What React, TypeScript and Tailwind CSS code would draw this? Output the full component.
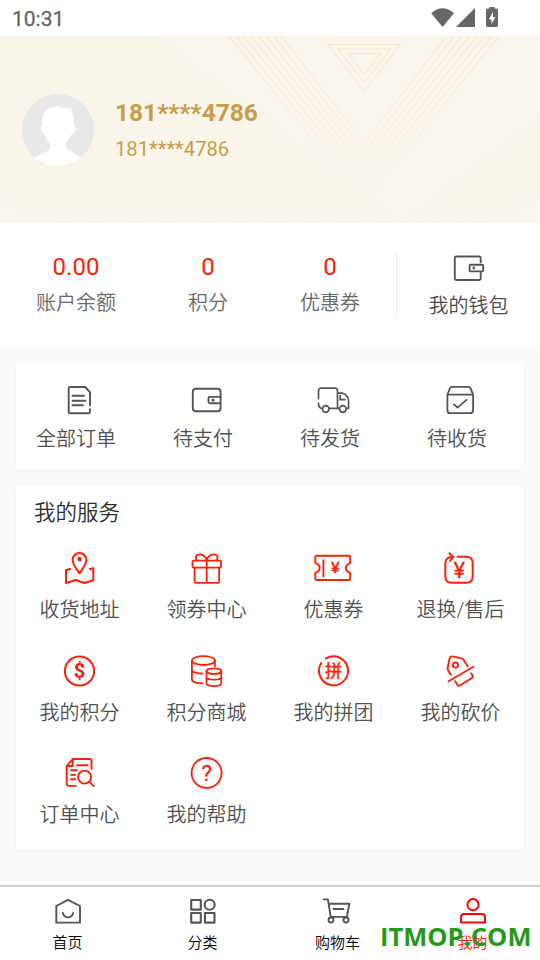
import type { ReactNode } from 'react';

type Item = { label: string; icon: ReactNode };

const GRAY = '#555';
const RED = '#fb2108';

function Icon({ w = 41, h = 40, color = RED, sw = 2, children }: {
  w?: number;
  h?: number;
  color?: string;
  sw?: number;
  children: ReactNode;
}) {
  return (
    <svg
      width={w}
      height={h}
      viewBox={`0 0 ${w} ${h}`}
      fill="none"
      stroke={color}
      strokeWidth={sw}
      strokeLinecap="round"
      strokeLinejoin="round"
      className="block shrink-0"
    >
      {children}
    </svg>
  );
}

const orders: Item[] = [
  {
    label: '全部订单',
    icon: (
      <Icon color={GRAY} sw={1.9}>
        <path d="M31 29.3v2.5q0 1.4-1.4 1.4H11q-1.3 0-1.3-1.3V8.2Q9.7 7 11 7h15.3l4.7 5.3v13.2M13.5 15.7H25M13.5 20.7h13M13.5 25.3H24" />
      </Icon>
    ),
  },
  {
    label: '待支付',
    icon: (
      <Icon color={GRAY} sw={1.9}>
        <rect x="6.8" y="8.7" width="27.8" height="22.6" rx="3" />
        <path d="M34.6 16.9H24q-1.5 0-1.5 1.5v3.4q0 1.5 1.5 1.5h10.6" />
        <circle cx="27" cy="20.1" r="0.7" fill={GRAY} />
      </Icon>
    ),
  },
  {
    label: '待发货',
    icon: (
      <Icon color={GRAY} sw={1.7}>
        <path d="M5.5 18.7V11q0-2.8 2.8-2.8h13.4q2.8 0 2.8 2.8v17.2M5.5 23.3q0 4.8 3.6 5.2M16.2 28.3h10M24.5 13.2h5.3c3.4.9 5.8 4.4 5.8 7.8v7.3h-2.2M27.2 15.5v4.2h4.6" />
        <circle cx="12.7" cy="29" r="3.3" />
        <circle cx="29.8" cy="29" r="3.3" />
      </Icon>
    ),
  },
  {
    label: '待收货',
    icon: (
      <Icon color={GRAY} sw={1.8}>
        <path d="M7.4 14.7 9.9 8.2q.6-1.4 2-1.4h16.6q1.4 0 2 1.4l2.6 6.5v15.5q0 3-3 3H10.4q-3 0-3-3zH33M13.9 24.3l3.6 3.3 9-7.7" />
      </Icon>
    ),
  },
];

const services: Item[] = [
  {
    label: '收货地址',
    icon: (
      <Icon>
        <path d="M20.4 25.3C17 20.5 13.6 16.2 13.6 12a6.9 7.1 0 0 1 13.8 0c0 4.2-3.4 8.5-7 13.3zM11 21l-4 1.3V35l9.7-3 8.6 3 9-2.8V20.1l-3.5.9" />
        <circle cx="20.5" cy="11" r="1.2" fill={RED} />
      </Icon>
    ),
  },
  {
    label: '领券中心',
    icon: (
      <Icon sw={1.8}>
        <rect x="6.5" y="12.6" width="28.6" height="7" rx="1.2" />
        <path d="M8.6 19.6v13.3q0 1.9 1.9 1.9h20.7q1.9 0 1.9-1.9V19.6M20.7 12.6v22M20.7 12.4C19.5 7.5 14.5 5 10.8 7.3c-1.6 1.7-1 3.6.3 5.1M20.7 12.4c1.2-4.9 6.2-7.4 9.9-5.1 1.6 1.7 1 3.6-.3 5.1" />
      </Icon>
    ),
  },
  {
    label: '优惠券',
    icon: (
      <Icon sw={1.9}>
        <path d="M4 7.8h31.5q1.7 0 1.7 1.7v5.7c-5.8 2-5.8 7.6 0 9.6v5.5q0 1.7-1.7 1.7H4q-1.7 0-1.7-1.7v-5.5c5.8-2 5.8-7.6 0-9.6V9.5Q2.3 7.8 4 7.8zM10.4 12.3v15.9" />
        <text x="22.4" y="25.2" textAnchor="middle" fill={RED} strokeWidth="0.6" className="text-[15.5px] font-normal font-[Roboto]">¥</text>
      </Icon>
    ),
  },
  {
    label: '退换/售后',
    icon: (
      <Icon>
        <path d="M17.6 8.8h8.6q6.5 0 6.5 6.5v13q0 6.5-6.5 6.5H11.8q-6.5 0-6.5-6.5V15.5q0-6.5 7.7-6.8M9.3 5.3l4 3.5-3.3 4" />
        <text x="19.4" y="29.8" textAnchor="middle" fill={RED} strokeWidth="0.3" className="text-[22px] font-normal font-[Roboto]">¥</text>
      </Icon>
    ),
  },
  {
    label: '我的积分',
    icon: (
      <Icon>
        <circle cx="20.5" cy="20" r="14.6" />
        <text x="20.4" y="26.9" textAnchor="middle" fill={RED} stroke="none" className="text-[20px] font-bold font-[Roboto]">$</text>
      </Icon>
    ),
  },
  {
    label: '积分商城',
    icon: (
      <Icon sw={1.8}>
        <ellipse cx="17.4" cy="9.6" rx="11.5" ry="4.4" />
        <path d="M5.9 9.6v19.2c0 2 4.5 3.5 10.6 3.5M5.9 18.4c0 2.5 4.5 4.3 10.6 4.3M28.9 9.6V15" />
        <ellipse cx="27.9" cy="20.2" rx="7.4" ry="2.8" />
        <path d="M20.5 20.2v12c0 3.8 14.8 3.8 14.8 0v-12M20.5 26c0 3.6 14.8 3.6 14.8 0" />
      </Icon>
    ),
  },
  {
    label: '我的拼团',
    icon: (
      <Icon>
        <path d="M13 7.4A14.5 14.5 0 1 1 8.3 12" />
        <text x="20.4" y="26.3" textAnchor="middle" fill={RED} strokeWidth="0.5" className="text-[17px] font-normal font-['Noto_Sans_CJK_SC']">拼</text>
      </Icon>
    ),
  },
  {
    label: '我的砍价',
    icon: (
      <Icon sw={1.9}>
        <path d="M10.8 23.7 7.8 18.7Q7.4 18 7.6 17.2L9.7 7.3Q10.2 5 12.4 5.4l9.2 2q1.2.3 1.9 1.4l4.3 6.7M8.5 30.3l25-14.6M15.2 30.3l2 3.5q1 1.6 2.6.7l11.8-7.3q1.8-1.2.9-2.8l-1.2-2" />
        <circle cx="15.4" cy="14" r="2.6" />
      </Icon>
    ),
  },
  {
    label: '订单中心',
    icon: (
      <Icon sw={1.9}>
        <path d="M32.5 15.8V7.8q0-1.8-1.8-1.8h-17l-6 7v17.8q0 2.1 2.1 2.1h7M13.7 6v7h-6M18 12.3h10.5M12 17.2h5.7M12 21.9h4.3M12 26.3h4.3M30.3 28.8l4.3 4.3" />
        <circle cx="25.6" cy="24.1" r="6.5" />
      </Icon>
    ),
  },
  {
    label: '我的帮助',
    icon: (
      <Icon sw={1.8}>
        <circle cx="20.6" cy="20" r="15" />
        <text x="20.6" y="27.8" textAnchor="middle" fill={RED} strokeWidth="0.3" className="text-[22px] font-normal font-[Roboto]">?</text>
      </Icon>
    ),
  },
];

const tabs: Item[] = [
  {
    label: '首页',
    icon: (
      <Icon w={31} h={32} color={GRAY} sw={1.9}>
        <path d="M16 4.8 28 11v16.6H4.3V11zM10.8 18c1.5 5.8 8.9 5.8 10.4 0" strokeLinejoin="miter" />
      </Icon>
    ),
  },
  {
    label: '分类',
    icon: (
      <Icon w={31} h={32} color={GRAY} sw={2.1}>
        <rect x="4.2" y="5" width="9.6" height="9.6" />
        <circle cx="22.7" cy="9.8" r="5" />
        <rect x="4.2" y="18" width="9.6" height="9.6" />
        <rect x="17.9" y="18" width="9.6" height="9.6" />
      </Icon>
    ),
  },
  {
    label: '购物车',
    icon: (
      <Icon w={31} h={32} color={GRAY} sw={1.9}>
        <path d="M1.7 4.4h4.2L8.7 21.9h16.2l2.5-13.2H6.7M11.5 14h10" />
        <circle cx="9" cy="25" r="2.5" />
        <circle cx="24" cy="25" r="2.5" />
      </Icon>
    ),
  },
  {
    label: '我的',
    icon: (
      <Icon w={31} h={32} color="#fb0505" sw={2}>
        <circle cx="16" cy="9.7" r="5.6" />
        <path d="M4 27.6v-5.5q0-3.2 3.2-3.2h17.6q3.2 0 3.2 3.2v5.5z" />
      </Icon>
    ),
  },
];

function StatusBar() {
  return (
    <div className="flex h-9 items-center justify-between bg-white pl-3 pr-10">
      <span className="pt-0.5 text-[21px] font-normal leading-9 text-[#666] [-webkit-text-stroke:0.3px_#666]">10:31</span>
      <svg width="70" height="24" viewBox="0 0 70 24" fill="#666">
        <path d="M1.2 7.2q11.4-10 22.8 0L12.6 21z" />
        <path d="M45 2v19H26z" />
        <path d="M59.5 1h5v1.5h2q1.5 0 1.5 1.5v15.5q0 1.5-1.5 1.5h-9q-1.5 0-1.5-1.5V4q0-1.5 1.5-1.5h2z" />
        <path d="m63 5.5-4 8h2.5v4.5l4-7H63z" fill="#fff" />
      </svg>
    </div>
  );
}

function HeaderPattern() {
  return (
    <svg width="540" height="187" viewBox="0 36 540 187" fill="none" className="absolute inset-0">
      <defs>
        <linearGradient id="fade" gradientUnits="userSpaceOnUse" x1="0" y1="36" x2="0" y2="205">
          <stop offset="0" stopColor="#f7e6c6" />
          <stop offset="0.7" stopColor="#f8f1df" />
          <stop offset="1" stopColor="#fbf6ed" />
        </linearGradient>
        <clipPath id="left">
          <path d="M0 36h158L404 223H35L0 200z" />
        </clipPath>
        <clipPath id="right">
          <path d="M400 223 540 117v77l-42 29z" />
        </clipPath>
      </defs>
      <g clipPath="url(#left)" stroke="#f8f2e1" strokeWidth="1">
        {Array.from({ length: 110 }, (_, i) => (
          <path key={i} d={`M0 ${-250 + i * 4.3}l540 356`} />
        ))}
      </g>
      <g clipPath="url(#right)" stroke="#f8f2e2" strokeWidth="1">
        {Array.from({ length: 26 }, (_, i) => (
          <path key={i} d={`M400 ${223 + i * 4}l140-${106 - i * 0.5}`} />
        ))}
      </g>
      <g stroke="url(#fade)" strokeWidth="1.1">
        {Array.from({ length: 8 }, (_, i) => (
          <path key={i} d={`M${281 - i * 7.5} 36 364.3 ${143 + i * 8.5}L${447 + i * 7.5} 36`} />
        ))}
        <path d="M328 44.5h72L364.3 91.5zM338 49h52.5L364.3 83zM348 53.5h32.5L364.3 74.5z" />
      </g>
    </svg>
  );
}

function Avatar() {
  return (
    <svg width="72" height="72" viewBox="0 0 72 72" className="shrink-0">
      <defs>
        <clipPath id="avatar">
          <circle cx="36" cy="36" r="36" />
        </clipPath>
      </defs>
      <g clipPath="url(#avatar)">
        <path d="M0 0h72v72H0z" fill="#e8e8e8" />
        <path
          d="M50 14c-1.500 2-.7 3.5 1 6.5.8 3 .8 7 .8 11 2.5.5 2.5 4 .3 7-2.1.4-4.1 5-7.6 9.5-1.5 4 0 7 3.500 9 4 2 8.500 4 12.500 6.500V72H12v-8.500c4-2 8-3.500 12-5.500 3.500-2 5-5 4-8.500-4-5-6.500-9.500-7.500-11-2.500-2.500-2.500-6.500-.2-7.500 0-5 .2-8 1.200-10.500C25 13 34 10.500 41 13.500c3 1 6 1.300 9 .5z"
          fill="#fff"
        />
      </g>
    </svg>
  );
}

function Stat({ value, label, width }: { value: string; label: string; width: string }) {
  return (
    <div className={`flex flex-col items-center ${width}`}>
      <span className="text-2xl leading-8 text-[#fb2108]">{value}</span>
      <span className="mt-1 text-xl font-[350] leading-8 text-[#666]">{label}</span>
    </div>
  );
}

export default function App() {
  return (
    <div className="flex h-[960px] w-[540px] flex-col overflow-hidden bg-[#fafafa] font-[Roboto,'Noto_Sans_CJK_SC',sans-serif]">
      <StatusBar />

      {/* Profile */}
      <header className="relative h-[187px] bg-[#fbf6ed]">
        <HeaderPattern />
        <div className="relative flex items-center pl-[22px] pt-[57px] text-[#c79d47]">
          <Avatar />
          <div className="ml-[21px] mt-0.5 flex flex-col">
            <span className="text-[24.5px] font-bold leading-9">181****4786</span>
            <span className="text-[20.2px] leading-9">181****4786</span>
          </div>
        </div>
      </header>

      {/* Balance */}
      <section className="flex h-[124px] items-start bg-white pt-7">
        <div className="flex grow">
          <Stat value="0.00" label="账户余额" width="ml-[10px] w-[132px]" />
          <Stat value="0" label="积分" width="w-[132px]" />
          <Stat value="0" label="优惠券" width="w-[112px]" />
        </div>
        <div className="mt-px h-[66px] w-px bg-[#ececec]" />
        <div className="flex w-[143px] flex-col items-center">
          <div className="-mt-[3px] pr-0.5">
            <Icon w={40} color={GRAY} sw={1.9}>
              <path d="M32.7 14.3V10q0-1.5-1.5-1.5H8.3q-1.5 0-1.5 1.5v20.5q0 1.5 1.5 1.5h22.9q1.5 0 1.5-1.5v-5.7" />
              <rect x="21.6" y="16.8" width="13.6" height="6.6" rx="1" />
              <circle cx="25.8" cy="20" r="0.5" fill={GRAY} />
            </Icon>
          </div>
          <span className="mt-0.5 text-xl font-[350] leading-8 text-[#4a4a4a]">我的钱包</span>
        </div>
      </section>

      {/* Orders */}
      <section className="mx-4 mt-3.5 grid h-[109px] grid-cols-4 rounded bg-white pt-[19px] shadow-[0_1px_3px_rgba(0,0,0,0.05)]">
        {orders.map((item) => (
          <div key={item.label} className="flex flex-col items-center">
            {item.icon}
            <span className="mt-[3px] pr-[7px] text-xl font-[350] leading-8 text-[#505050]">{item.label}</span>
          </div>
        ))}
      </section>

      {/* Services */}
      <section className="mx-4 mt-4 h-[364px] rounded bg-white shadow-[0_1px_3px_rgba(0,0,0,0.05)]">
        <h2 className="pl-[18px] pt-[11px] text-[21.5px] font-[350] leading-8 text-[#2c2c2c]">我的服务</h2>
        <div className="mt-[19px] grid grid-cols-4 gap-y-[25px]">
          {services.map((item) => (
            <div key={item.label} className="flex h-[77.5px] flex-col items-center">
              {item.icon}
              <span className="mt-1.5 text-xl font-[350] leading-8 text-[#505050]">{item.label}</span>
            </div>
          ))}
        </div>
      </section>

      {/* Tab bar */}
      <nav className="relative mt-auto grid h-[75px] grid-cols-4 border-t-2 border-[#d0d0d0] bg-white pt-2">
        {tabs.map((item, i) => (
          <div key={item.label} className="flex flex-col items-center">
            {item.icon}
            <span className={`mt-1 text-[15px] font-[350] leading-6 ${i === 3 ? 'text-[#fb2108]' : 'text-black'}`}>{item.label}</span>
          </div>
        ))}
        <span className="absolute left-[380px] top-[31px] font-['Open_Sans'] text-[25.5px] font-bold leading-9 text-[#27981a]">
          ITMOP.COM
        </span>
      </nav>
    </div>
  );
}
